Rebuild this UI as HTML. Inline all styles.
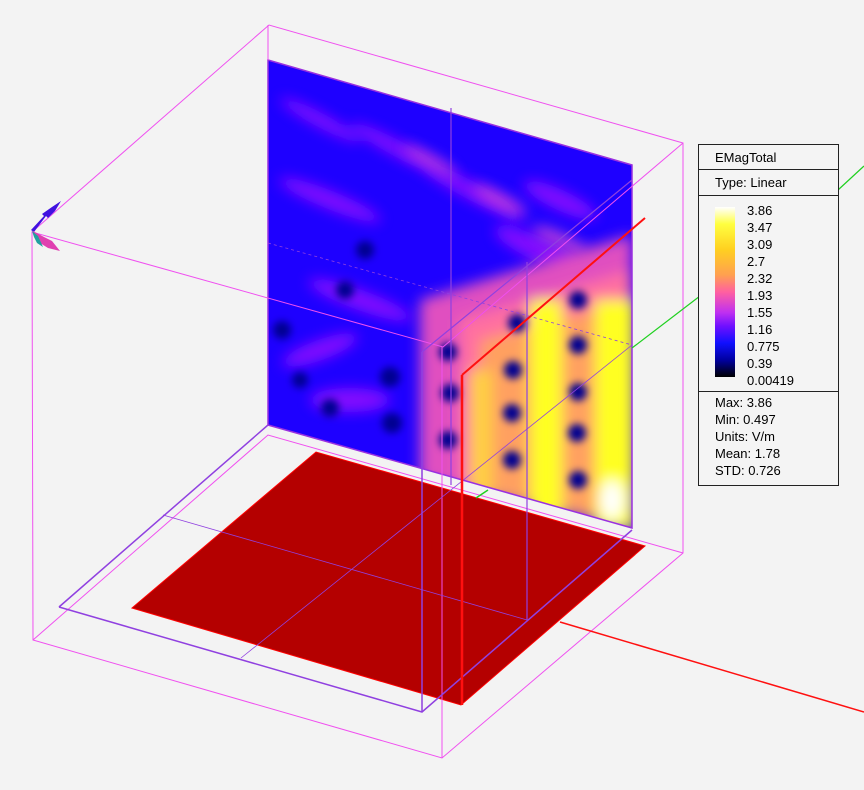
<!DOCTYPE html>
<html><head><meta charset="utf-8"><style>
html,body{margin:0;padding:0;background:#f3f3f3;}
#w{position:relative;width:864px;height:790px;overflow:hidden;background:#f3f3f3;font-family:"Liberation Sans",Arial,sans-serif;}
.lg{position:absolute;left:698px;top:144px;width:139px;height:340px;border:1px solid #222;background:#f4f4f4;font-size:13px;color:#000;}
.lg .r{border-bottom:1px solid #222;height:25px;line-height:25px;padding-left:16px;box-sizing:border-box;}
.bar{position:absolute;left:16px;top:62px;width:20px;height:170px;background:linear-gradient(to bottom,#fff 0%,#ffff40 10%,#ffd020 25%,#ffa050 40%,#ff60a0 50%,#c030f0 62%,#7010ff 70%,#1010ff 80%,#0000a0 90%,#000 100%);}
.nums{position:absolute;left:48px;top:57px;line-height:17px;font-size:13px;}
.st{position:absolute;left:0;top:246px;width:100%;border-top:1px solid #222;padding:2px 0 0 16px;line-height:17px;box-sizing:border-box;}
</style></head><body><div id="w">
<svg width="864" height="790" style="position:absolute;left:0;top:0">
<defs>
<clipPath id="pl"><polygon points="268,60 632,165 632,528 268,425"/></clipPath>
<filter id="b" x="-20%" y="-20%" width="140%" height="140%"><feGaussianBlur stdDeviation="7"/></filter>
<filter id="b2"><feGaussianBlur stdDeviation="4"/></filter>
</defs>
<!-- red ground plane -->
<polygon points="132,608 316,452 645,546 461,705" fill="#b40000" stroke="#ff0000" stroke-width="1"/>
<!-- field plane -->
<g clip-path="url(#pl)">
<rect x="260" y="50" width="380" height="490" fill="#1e00ff"/>
<g filter="url(#b)" fill="#8a10ff" opacity="0.95">
<ellipse cx="320" cy="120" rx="45" ry="7" transform="rotate(28 320 120)"/>
<ellipse cx="400" cy="150" rx="55" ry="8" transform="rotate(28 400 150)"/>
<ellipse cx="470" cy="190" rx="60" ry="9" transform="rotate(28 470 190)"/>
<ellipse cx="330" cy="200" rx="55" ry="9" transform="rotate(22 330 200)"/>
<ellipse cx="540" cy="250" rx="50" ry="12" transform="rotate(25 540 250)"/>
<ellipse cx="360" cy="300" rx="55" ry="10" transform="rotate(20 360 300)"/>
<ellipse cx="320" cy="350" rx="40" ry="10" transform="rotate(-20 320 350)"/>
<ellipse cx="350" cy="400" rx="40" ry="12"/>
<ellipse cx="560" cy="200" rx="40" ry="10" transform="rotate(25 560 200)"/>
</g>
<g filter="url(#b)" fill="#e050d0" opacity="0.8">
<ellipse cx="430" cy="160" rx="30" ry="5" transform="rotate(28 430 160)"/>
<ellipse cx="500" cy="200" rx="30" ry="6" transform="rotate(28 500 200)"/>
<ellipse cx="560" cy="240" rx="30" ry="7" transform="rotate(25 560 240)"/>
</g>
<g filter="url(#b)">
<polygon points="420,300 632,235 632,528 420,480" fill="#e050c0"/>
<polygon points="460,320 632,270 632,528 460,490" fill="#ff70a0"/>
<polygon points="480,340 632,300 632,528 480,495" fill="#ffa060"/>
<rect x="530" y="300" width="32" height="220" fill="#ffff20"/>
<rect x="595" y="300" width="40" height="230" fill="#ffff20"/>
<rect x="470" y="370" width="22" height="130" fill="#ffd040"/>
<ellipse cx="612" cy="500" rx="12" ry="20" fill="#fff"/>
</g>
<g filter="url(#b2)" fill="#000090">
<circle cx="517" cy="323" r="9"/><circle cx="513" cy="370" r="9"/><circle cx="512" cy="413" r="9"/><circle cx="512" cy="460" r="9"/>
<circle cx="578" cy="300" r="9"/><circle cx="578" cy="345" r="9"/><circle cx="578" cy="392" r="9"/><circle cx="577" cy="433" r="9"/><circle cx="578" cy="480" r="9"/>
<circle cx="448" cy="352" r="9"/><circle cx="450" cy="393" r="9"/><circle cx="448" cy="440" r="9"/>
<circle cx="390" cy="377" r="10"/><circle cx="392" cy="423" r="10"/>
<circle cx="365" cy="250" r="9"/><circle cx="345" cy="290" r="9"/><circle cx="282" cy="330" r="9"/><circle cx="330" cy="408" r="9"/><circle cx="300" cy="380" r="8"/>
</g>
</g>
<polygon points="268,60 632,165 632,528 268,425" fill="none" stroke="#9a30e0" stroke-width="1.5"/>
<!-- magenta box -->
<g stroke="#f050f0" stroke-width="1" fill="none">
<polyline points="32,232 269,25 683,143 683,553 442,758 33,640 32,232 443,347 683,143"/>
<line x1="442" y1="347" x2="442" y2="758"/>
<line x1="268" y1="25" x2="268" y2="60"/>
<polyline points="33,640 268,435 683,553"/>
</g>
<!-- purple plane outlines -->
<g stroke="#9040e0" stroke-width="1.2" fill="none">
<polyline points="59,607 268,425" stroke-width="1.5"/>
<polyline points="59,607 422,712 632,530" stroke-width="1.5"/>
<line x1="422" y1="352" x2="422" y2="712" stroke-width="1.5"/>
<line x1="422" y1="352" x2="632" y2="180"/>
<line x1="527" y1="262" x2="527" y2="620"/>
<line x1="451" y1="108" x2="451" y2="485"/>
<line x1="163" y1="515" x2="527" y2="620" stroke-width="0.8"/>
<line x1="241" y1="658" x2="632" y2="345" stroke-width="0.8"/>
<line x1="268" y1="243" x2="632" y2="345" stroke-dasharray="3,3" stroke-width="0.8"/>
</g>
<!-- axes -->
<line x1="462" y1="375" x2="462" y2="705" stroke="#ff1010" stroke-width="2.5"/>
<line x1="462" y1="375" x2="645" y2="218" stroke="#ff1010" stroke-width="2"/>
<line x1="560" y1="622" x2="864" y2="712" stroke="#ff1010" stroke-width="1.5"/>
<line x1="632" y1="348" x2="700" y2="296" stroke="#20d020" stroke-width="1.2"/>
<line x1="838" y1="190" x2="864" y2="166" stroke="#20d020" stroke-width="1.2"/>
<line x1="476" y1="498" x2="488" y2="490" stroke="#20d020" stroke-width="1.5"/>
<!-- small triad -->
<polygon points="31,230 44,216 42,214 52,207 61,201 55,211 48,218 46,216 34,232" fill="#4010e0"/>
<polygon points="33,231 44,237 52,241 60,251 48,248 40,243 35,236" fill="#e040b0"/>
<polygon points="32,231 38,236 43,247 37,243 34,237" fill="#20a0a0"/>
</svg>
<div class="lg">
<div class="r">EMagTotal</div>
<div class="r" style="height:26px">Type: Linear</div>
<div class="bar"></div>
<div class="nums">3.86<br>3.47<br>3.09<br>2.7<br>2.32<br>1.93<br>1.55<br>1.16<br>0.775<br>0.39<br>0.00419</div>
<div class="st">Max: 3.86<br>Min: 0.497<br>Units: V/m<br>Mean: 1.78<br>STD: 0.726</div>
</div>
</div></body></html>
